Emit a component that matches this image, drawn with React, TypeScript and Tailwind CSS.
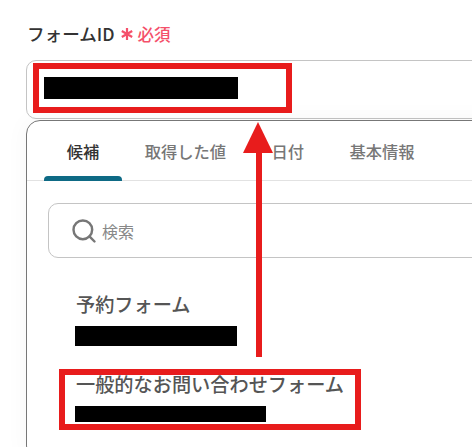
import React from "react";
import { Search } from "lucide-react";

const font = { fontFamily: '"Noto Sans CJK JP", "Noto Sans", sans-serif' };

const tabs = ["候補", "取得した値", "日付", "基本情報"];

export default function App() {
  return (
    <div className="relative w-[472px] h-[447px] overflow-hidden bg-white" style={font}>
      <div className="pt-[22px] pl-[26px] w-[560px]">
        {/* Label */}
        <div className="h-[24px] flex items-center pl-px text-[17.6px] leading-[24px] font-medium text-[#333]">
          <span>フォームID</span>
          <svg className="ml-[5px]" width="14" height="14" viewBox="0 0 14 14" stroke="#f4506a" strokeWidth="2.2">
            <path d="M7 1v12M1.8 4l10.4 6M12.2 4L1.8 10" />
          </svg>
          <span className="ml-[4px] text-[#f4506a] text-[16.5px]">必須</span>
        </div>

        {/* Selected value */}
        <div className="mt-[14px] h-[59px] flex items-center pl-[17px] border border-[#c4c4c4] rounded-[10px] bg-white">
          <div className="mb-[3px] w-[194px] h-[22px] bg-black" />
        </div>

        {/* Dropdown */}
        <div className="mt-px h-[340px] border border-[#777] rounded-[14px] bg-white shadow-[0_0_24px_rgba(0,0,0,0.04)]">
          <div className="flex h-[60px] pl-[17px] border-b border-[#e2e2e2]">
            {tabs.map((tab, i) => (
              <div key={tab} className="relative h-[60px] px-[22.7px] flex items-center">
                <span className={`text-[16.3px] font-medium ${i === 0 ? "text-[#333]" : "text-[#777]"}`}>{tab}</span>
                {i === 0 && <div className="absolute left-0 right-0 bottom-0 h-[5px] bg-[#0e6a85] rounded-t-[4px]" />}
              </div>
            ))}
          </div>

          {/* Search */}
          <div className="ml-[21px] mt-[22px] h-[55px] flex items-center pl-[21px] border border-[#c4c4c4] rounded-[10px]">
            <Search className="w-[28px] h-[28px] text-[#777]" strokeWidth={2.1} />
            <span className="ml-[4px] text-[16px] text-[#888]">検索</span>
          </div>

          {/* Options */}
          <div className="mt-[32px] pl-[49px]">
            <div className="text-[19.2px] leading-[28px] font-medium text-[#555]">予約フォーム</div>
            <div className="mt-[8px] -ml-px w-[162px] h-[20px] bg-black" />
            <div className="mt-[24px] text-[19.2px] leading-[28px] font-medium text-[#555]">一般的なお問い合わせフォーム</div>
            <div className="mt-[8px] -ml-px w-[191px] h-[16px] bg-black" />
          </div>
        </div>
      </div>

      {/* Red callouts */}
      <div className="absolute left-[33px] top-[63px] w-[259px] h-[50px] border-[6px] border-[#e81c1c]" />
      <div className="absolute left-[59px] top-[369px] w-[302px] h-[61px] border-[6px] border-[#e81c1c]" />
      <svg className="absolute left-[240px] top-[120px]" width="36" height="240" viewBox="0 0 36 240">
        <rect x="16" y="30" width="6" height="207" fill="#e81c1c" />
        <polygon points="18,2 33,33 3,33" fill="#e81c1c" />
      </svg>
    </div>
  );
}
